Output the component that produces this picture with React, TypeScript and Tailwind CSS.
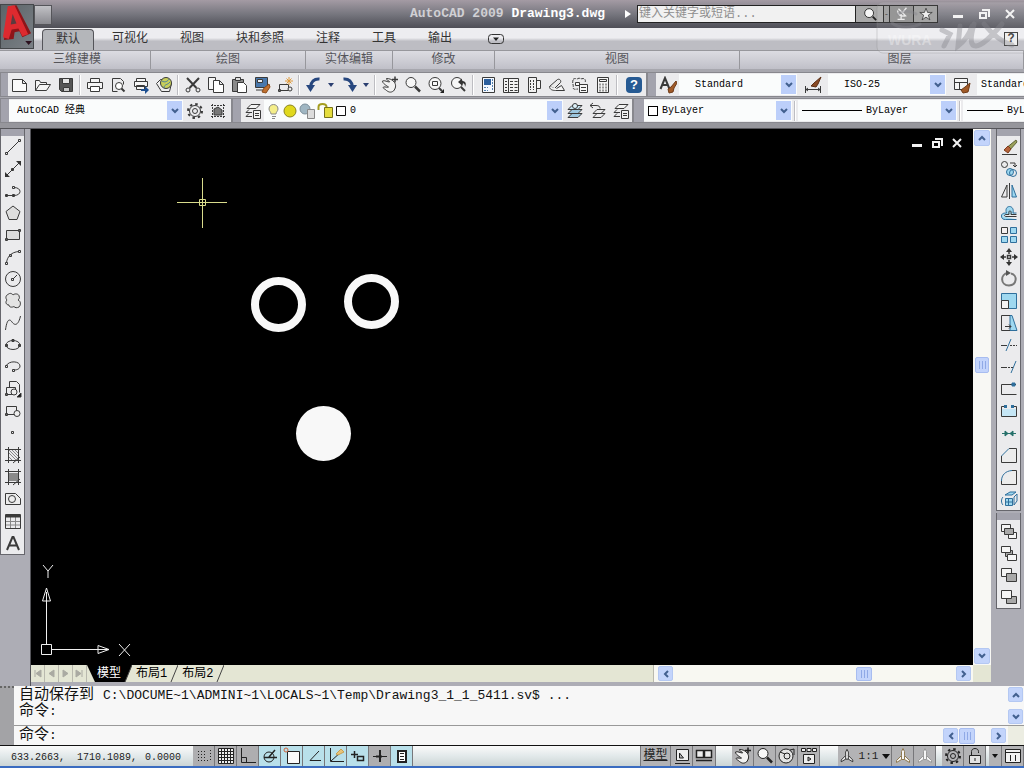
import { useState } from "react";
import type { ReactNode } from "react";
import clsx from "clsx";

const blue = "#2f6f9c";
const sky = "#9fd8f0";

const icons: Record<string, ReactNode> = {
  // --- standard toolbar ---
  new: <path d="M1.500 3.500h10l4 4v8h-14zM11.500 3.500v4h4" fill="#fafafa" />,
  open: <path d="M1.500 14.500v-10h4l1 2h6v2M1.500 14.500l4-6h11l-4 6z" fill="#f4f4f4" />,
  save: (
    <>
      <path d="M2.500 2.500h13v13h-11l-2-2z" fill="#555" />
      <path d="M5.500 2.500h7v5h-7z" fill="#e4e4e4" />
      <path d="M6.500 11.500h6v4h-6z" fill="#c9c9c9" />
    </>
  ),
  print: (
    <>
      <path d="M4.500 6.500v-4h9v4M1.500 6.500h15v6h-15z" fill="#f5f5f5" />
      <path d="M4.500 10.500h9v5h-9z" fill="#fff" />
    </>
  ),
  preview: (
    <>
      <path d="M3.500 15.500v-13h8l3 3v3M3.500 15.500h5" />
      <circle cx="10" cy="10" r="3.500" fill="#fff" />
      <path d="M12.500 12.500l3 3" strokeWidth="2" />
    </>
  ),
  publish: (
    <>
      <path d="M4.500 5.500v-3h9v3M2.500 5.500h13v5h-13zM4.500 9.500h8v4h-8z" fill="#f5f5f5" />
      <path d="M9 13h4v-3l4 4-4 4v-3H9z" fill="#1d4f91" stroke="none" />
    </>
  ),
  globe: (
    <>
      <path d="M1.500 7.500l4-4h7l4 4-2 8h-8z" fill="#f0f0f0" />
      <circle cx="11" cy="7" r="5.500" fill="#c8cf5a" />
      <path d="M7 5c3 2 6 0 7-2M9 12c0-4 4-3 6-6" stroke="#4c7d9c" />
    </>
  ),
  cut: (
    <>
      <path d="M3 2l9.500 10M15 2L5.500 12" strokeWidth="2" />
      <circle cx="4" cy="14" r="2" />
      <circle cx="14" cy="14" r="2" />
    </>
  ),
  copy: (
    <>
      <path d="M1.500 1.500h7v12h-7z" fill="#f6f6f6" />
      <path d="M6.500 4.500h6l4 4v8h-10zM12.500 4.500v4h4" fill="#fff" />
    </>
  ),
  paste: (
    <>
      <path d="M2.500 3.500h11v12h-11z" fill="#8a8a8a" />
      <path d="M5.500 1.500h5v3h-5z" fill="#ddd" />
      <path d="M7.500 6.500h6l3 3v7h-9z" fill="#fff" />
    </>
  ),
  match: (
    <>
      <path d="M2.500 1.500h12v10h-12z" fill="#4878ad" />
      <path d="M4.500 3.500h5v3h-5z" fill="#e8eef6" />
      <path d="M3 14h7" />
      <path d="M16 8l-5 4-2 4 4 1 4-6z" fill="#c07030" stroke="#8a4a18" />
    </>
  ),
  block: (
    <>
      <path d="M3.500 8.500h9v6h-9zM2.500 13.500h2v2h-2z" />
      <path d="M13 1v8M9 5h8M10.500 2.500l5 5M15.500 2.500l-5 5" stroke="#df9a3a" />
      <circle cx="14" cy="13" r="2" fill="#eee" />
    </>
  ),
  undo: (
    <>
      <path d="M14.500 3C9 2.500 6 6 5.500 11" stroke="#27477f" strokeWidth="3" />
      <path d="M1 9h9l-4.500 7z" fill="#27477f" stroke="none" />
    </>
  ),
  redo: (
    <>
      <path d="M3.500 3C9 2.500 12 6 12.500 11" stroke="#27477f" strokeWidth="3" />
      <path d="M8 9h9l-4.500 7z" fill="#27477f" stroke="none" />
    </>
  ),
  pan: (
    <>
      <path d="M1.500 5c2-1 5 1 7 1 1-1-4-2-3-3.500 3 0 6 1 8 4 2 3 1 6-1 8.500-3 2-5 1-7-.5-2-2-4-2-3-3.500 2-.5 4 1 5 0C6 10 1 7 1.500 5z" fill="#f2f2f2" />
      <path d="M14 0.500v6M11 3.500h6" strokeWidth="1.500" />
    </>
  ),
  zoom: (
    <>
      <circle cx="7" cy="6.500" r="5" fill="#f7f7f7" />
      <path d="M11 10.500l5 5" strokeWidth="2.500" />
    </>
  ),
  zoomWindow: (
    <>
      <circle cx="8" cy="7.500" r="6" fill="#f7f7f7" />
      <path d="M5.500 5.500h5v4h-5z" />
      <path d="M12 12l3 3" strokeWidth="2" />
      <path d="M17 13v4h-4z" fill="#222" stroke="none" />
    </>
  ),
  zoomPrev: (
    <>
      <circle cx="7" cy="7" r="5.500" fill="#f7f7f7" />
      <path d="M11 11l4 4" strokeWidth="2" />
      <path d="M8 6l4-3.500V5c3 0 5 2 3 6 0-3-1-4-3-4v2.500z" fill="#333" stroke="none" />
    </>
  ),
  props: (
    <>
      <path d="M3.500 1.500h12v15h-12z" fill="#f5f9ff" />
      <path d="M5 3h7v6H5z" fill="#2c5f9d" stroke="none" />
      <path d="M5 11.500h4M5 14.500h4M13.500 3v12" stroke="#5580ad" strokeDasharray="2 1" />
    </>
  ),
  design: (
    <>
      <path d="M1.500 2.500h15v14h-15zM6.500 2.500v14" fill="#f3f3f3" />
      <path d="M3 5.500h2M3 8.500h2M3 11.500h2M3 14.500h2M8 5.500h3M12.500 5.500h3M8 8.500h3M12.500 8.500h3M8 11.500h3M12.500 11.500h3M8 14.500h3M12.500 14.500h3" />
    </>
  ),
  palette: (
    <>
      <path d="M3.500 1.500h8v15h-8zM11.500 4.500h4v8h-4" fill="#f1f1f1" />
      <path d="M5.500 4v10M8.500 4v10" strokeDasharray="2 1" />
    </>
  ),
  sheet: (
    <>
      <path d="M1.500 10.500l8-7c2-1 4 1 3 3l-6 6z" fill="#ececec" />
      <path d="M1.500 10.500c0 3 3 4 6 4h9l-3-5-5 3" fill="#f4f4f4" />
    </>
  ),
  markup: (
    <>
      <path d="M2 3.500c2-2 4 0 5-1 2-1 3 1 5 0 2 0 3 2 2 4M2 4c-1 4 1 5 0 8 1 2 3 1 5 1" strokeDasharray="3 1" />
      <path d="M8.500 8.500h8v8h-8zM10 11.500h5M10 14.500h5M4.500 6.500h4v3h-4z" fill="#f7f7f7" />
    </>
  ),
  calc: (
    <>
      <path d="M3.500 1.500h11v15h-11z" fill="#f5f5f5" />
      <path d="M5.500 3.500h7v2h-7z" />
      <path d="M5.500 8.500h8M5.500 11.500h8M5.500 14.500h8" strokeDasharray="1 2" strokeWidth="2" />
    </>
  ),
  brushA: (
    <>
      <path d="M1.500 13L6 2l4.500 11M3 9h6" strokeWidth="2" />
      <path d="M17 5l-5 6-3 2 1 4 4-1 1-4 3-5z" fill="#a15a28" stroke="#6d3a17" />
    </>
  ),
  dim: (
    <>
      <path d="M1.500 10v7M16.500 10v7M2 13.500h14M4 12l-2 1.500L4 15M14 12l2 1.500-2 1.500" />
      <path d="M17 1l-7 6-3 3 5 1 2-3z" fill="#8a4a24" stroke="#5c2f14" />
    </>
  ),
  tableBrush: (
    <>
      <path d="M1.500 2.500h13v11h-13zM1.500 6.500h13M6.500 6.500v7" fill="#f5f5f5" />
      <path d="M17 7l-5 4-4 3 2 3 5-1 1-4z" fill="#a15a28" stroke="#6d3a17" />
    </>
  ),
  gear: (
    <>
      <circle cx="9" cy="9" r="2.500" />
      <circle cx="9" cy="9" r="5.500" />
      <circle cx="9" cy="9" r="7" strokeWidth="2" strokeDasharray="2.500 3" />
    </>
  ),
  frame: (
    <>
      <path d="M2 3.500h14M2 14.500h14M3.500 2v14M14.500 2v14" strokeDasharray="2 1" />
      <path d="M5 13V7l4-2 4 3v5z" fill="#777" />
    </>
  ),
  layers: (
    <path d="M3 6.500l4-4h9l-4 4zM2 10.500l3-3M2 10.500h6M2 14.500l3-3M2 14.500h6M9.500 8.500h7v8h-7zM11 11.500h4M11 13.500h4" fill="#f3f3f3" />
  ),
  layerCur: (
    <>
      <path d="M2 15.500l4-4h10l-4 4zM2 11.500l4-4h10l-4 4z" fill="#9cc6de" />
      <path d="M2 7.500l4-4h10l-4 4z" fill="#c6e4f2" />
      <circle cx="9" cy="4" r="2.500" fill="#dff3fb" />
    </>
  ),
  layerPrev: (
    <path d="M4 15.500l4-4h8l-4 4zM4 11.500l4-4h8l-4 4zM1 3.500h6c3 0 4 1 4 3M4 1L1 3.500 4 6" fill="none" />
  ),
  // --- draw toolbar ---
  line: <path d="M3 15L15 3M1.500 14.500h2v2h-2zM14.500 1.500h2v2h-2z" />,
  xline: (
    <>
      <path d="M2 16L16 2M7.500 8.500h2v2h-2z" />
      <path d="M12 1h5v5zM1 12v5h5z" fill="#333" stroke="none" />
    </>
  ),
  pline: <path d="M2 13.500h8c8 0 8-8 0-8M1.500 12.500h2v2h-2zM8.500 12.500h2v2h-2zM8.500 4.500h2v2h-2z" />,
  polygon: <path d="M9 2l7 5.500-3 8H5l-3-8z" fill="#dedede" />,
  rect: <path d="M2.500 4.500h13v9h-13zM1.500 12.500h2v2h-2zM14.500 3.500h2v2h-2z" fill="#dcdcdc" />,
  arc: <path d="M2.500 15C3 9 7 4 15 3.500M1.500 14.500h2v2h-2zM5.500 6.500h2v2h-2zM14.500 2.500h2v2h-2z" />,
  circle: (
    <>
      <circle cx="9" cy="9" r="7.500" />
      <path d="M9 9l4-4M7.500 8.500h2v2h-2z" />
    </>
  ),
  cloud: (
    <path d="M4 2.500c2-2 4-1 5 .5 2-2 6-1 6 1 1 2 0 3-1 4 3 1 3 5 1 7-2 1-4 1-5-.5-2 1-5 1-5-1.500-3 0-4-3-2-5-2-2-1-5 1-5.500z" fill="#e3e3e3" />
  ),
  spline: <path d="M1.500 16C3 4 6 5 8 8s6 5 8.500-6" />,
  ellipse: (
    <>
      <ellipse cx="9" cy="9" rx="7" ry="4.500" />
      <path d="M1.500 8.500h2v2h-2zM14.500 8.500h2v2h-2zM8 3.500h2v2H8z" fill="#444" />
    </>
  ),
  ellipseArc: <path d="M2 8c3-6 14-5 14 0 0 3-3 4-6 4M1.500 7.500h2v2h-2zM8.500 11.500h2v2h-2z" />,
  insert: (
    <>
      <path d="M5.500 7v-5.500h7l3 3v8M2.500 7.500h9v7h-9z" />
      <path d="M1.500 13.500h2v2h-2z" />
      <circle cx="10" cy="12" r="3" fill="#eee" />
      <path d="M17 13v4h-4z" fill="#111" />
    </>
  ),
  makeBlock: (
    <>
      <path d="M2.500 4.500h10v8h-10zM1.500 11.500h2v2h-2z" />
      <circle cx="13" cy="11.500" r="3" fill="#eee" />
    </>
  ),
  point: <path d="M7.500 7.500h2v2h-2z" />,
  hatch: (
    <>
      <path d="M5 7l7 7M5 11l3 3M8 4l6 6M5 4l9 9M11 4l3 3" stroke="#888" />
      <path d="M1 3.500h16M1 14.500h16M4.500 1v16M14.500 1v16M9 17l7-6" />
    </>
  ),
  gradient: (
    <>
      <path d="M5 5h9v8H5z" fill="#8a8a8a" stroke="none" />
      <path d="M1 3.500h16M1 14.500h16M4.500 1v16M14.500 1v16M9 17l7-6" />
    </>
  ),
  region: (
    <>
      <path d="M1.500 3.500h10l5 5v6h-15z" fill="#ededed" />
      <circle cx="8" cy="9" r="3.500" />
    </>
  ),
  table: (
    <>
      <path d="M6.500 5v11M11.500 5v11M2 9.500h14M2 13h14" stroke="#888" />
      <path d="M1.500 2.500h15v14h-15z" />
      <path d="M2 4h14" strokeWidth="3" />
    </>
  ),
  text: <path d="M3 16L8.500 3h1L15 16M5 11.500h8" strokeWidth="2" />,
  // --- modify toolbar ---
  erase: (
    <>
      <path d="M2 16.500h15" />
      <path d="M16 2l1 2-8 9-4-2z" fill="#9aa05a" stroke="#5d6238" />
      <path d="M8 8l3 3-3 4-4-3z" fill="#b5623a" stroke="#7c3b1e" />
    </>
  ),
  copyObj: (
    <>
      <circle cx="4.500" cy="4.500" r="3" />
      <path d="M10 3h5v4M13 5l2 2 2-2" />
      <circle cx="10" cy="12" r="3.500" stroke={blue} fill={sky} />
      <circle cx="13" cy="13" r="3.500" stroke={blue} />
    </>
  ),
  mirror: (
    <>
      <path d="M7 3v12H1.500zM9.500 1v16" />
      <path d="M12 3v12h4.500z" fill={sky} stroke={blue} />
    </>
  ),
  offset: (
    <>
      <path d="M1.500 12c0-3 3-3 5-3C5 5 7 2.500 9.500 2.500S14 5 13 9h3.500M1.500 12c0 3 2 3.500 4 3.500h11" fill={sky} stroke={blue} />
      <path d="M16.500 12.500H6c-2 0-2-2 0-2h3c-1-5 3-5 2 0h5.500" />
    </>
  ),
  array: (
    <>
      <path d="M1.500 1.500h6v6h-6z" fill="#f5f0f0" />
      <path d="M10.500 1.500h6v6h-6zM1.500 10.500h6v6h-6zM10.500 10.500h6v6h-6z" fill={sky} stroke={blue} />
    </>
  ),
  move: (
    <>
      <path d="M9 3v3M9 12v3M3 9h3M12 9h3M7.500 7.500h3v3h-3z" strokeWidth="1.500" />
      <path d="M9 0l3 4H6zM9 18l3-4H6zM0 9l4-3v6zM18 9l-4-3v6z" fill="#333" stroke="none" />
    </>
  ),
  rotate: (
    <>
      <path d="M8 3c-8 1-8 12 1 12.500C17 15 18 5 11 3.500" stroke="#777" strokeWidth="2" />
      <path d="M6 0l5 3-5 3z" fill="#555" stroke="none" />
    </>
  ),
  scale: (
    <>
      <path d="M1.500 1.500h15v15h-8v-8h-7z" fill={sky} stroke={blue} />
      <path d="M1.500 8.500h7v8h-7z" fill="#f4f4f4" />
    </>
  ),
  stretch: (
    <>
      <path d="M10 1.500h2l5 15h-7z" fill={sky} stroke={blue} />
      <path d="M10 1.500H1.500v15H10M5 12.500h6M9 10.500l2 2-2 2" />
    </>
  ),
  trim: (
    <>
      <path d="M6 15L11 3" stroke={blue} />
      <path d="M1 9.500h6" />
      <path d="M10 9.500h7" strokeDasharray="2 1" />
    </>
  ),
  extend: (
    <>
      <path d="M11 15l5-12" stroke={blue} />
      <path d="M1 9.500h6" />
      <path d="M8 9.500h5" strokeDasharray="2 1" />
    </>
  ),
  breakAt: (
    <>
      <path d="M16 4.500H1.500v10h15" />
      <path d="M12 3h3v3h-3z" fill={blue} stroke={blue} />
    </>
  ),
  breakObj: (
    <>
      <path d="M2 7h14v8H2z" fill="#c5e6f5" stroke="none" />
      <path d="M4 4.500H1.500v10h15v-10H14" />
      <path d="M4 3h3v3H4zM11 3h3v3h-3z" fill={blue} stroke="none" />
    </>
  ),
  join: <path d="M2 9.500h14M5 7l3 2.500L5 12zM13 7l-3 2.500 3 2.500z" fill="#26716b" stroke="#26716b" />,
  chamfer: (
    <>
      <path d="M9 2.500h7.500v14h-15V10" fill="#ececec" />
      <path d="M1.500 10L9 2.500" stroke={blue} />
    </>
  ),
  fillet: (
    <>
      <path d="M12 2.500h4.500v14h-15V13" fill="#ececec" />
      <path d="M1.500 13c0-6 4-10 10.500-10.500" stroke={blue} />
    </>
  ),
  explode: (
    <>
      <path d="M5 5l5-3h6l-4 3z" fill={sky} stroke={blue} />
      <path d="M5.500 8.500h7v7h-7z" fill={sky} stroke={blue} />
      <path d="M3 7c-2 2-2 6 0 8M14 7l3-3v7l-3 4zM8.500 9v6M6 12h6" stroke={blue} />
    </>
  ),
  // --- draw order toolbar ---
  order1: (
    <>
      <path d="M1.500 2.500h9v7h-9zM8.500 10.500h8v6h-8z" fill="#f5f5f5" />
      <path d="M4.500 6.500h9v6h-9z" fill="#a9a9a9" />
    </>
  ),
  order2: (
    <>
      <path d="M5.500 6.500h7v6h-7z" fill="#a9a9a9" />
      <path d="M1.500 2.500h9v6h-9zM7.500 10.500h9v6h-9z" fill="#f5f5f5" />
    </>
  ),
  order3: (
    <>
      <path d="M1.500 2.500h10v8h-10z" fill="#f5f5f5" />
      <path d="M6.500 7.500h10v8h-10z" fill="#a9a9a9" />
    </>
  ),
  order4: (
    <>
      <path d="M6.500 8.500h10v7h-10z" fill="#a9a9a9" />
      <path d="M1.500 2.500h10v8h-10z" fill="#f5f5f5" />
    </>
  ),
  // --- status bar ---
  snap: <path d="M3 4.500h9M3 7.500h9M3 10.500h9M3 13.500h12M15.500 3v11" strokeDasharray="1 2" />,
  grid: <path d="M1.500 1.500h15v15h-15zM4.500 1v16M7.500 1v16M10.500 1v16M13.500 1v16M1 4.500h16M1 7.500h16M1 10.500h16M1 13.500h16" fill="#eee" />,
  ortho: <path d="M2.500 1v14.500H17M2.500 10.500h5v5" />,
  polar: (
    <>
      <circle cx="8" cy="10" r="5" />
      <path d="M3 10.500h13M8 10l6-7" strokeWidth="1.500" />
    </>
  ),
  osnap: (
    <>
      <path d="M4.500 4.500h12v12h-12z" fill="#fafafa" />
      <circle cx="3" cy="3" r="2" stroke="#d0633b" />
    </>
  ),
  otrack: <path d="M14 4L5 13.500h11" />,
  ducs: (
    <>
      <path d="M3.500 1v13.500H17M4 14L14 5" />
      <path d="M9 7l5-5 3 3-6 3z" fill="#e8c47a" stroke="#c9a050" />
    </>
  ),
  dyn: <path d="M2 7.500h7M5.500 4v7M8.500 9.500h6v4h-6z" strokeWidth="1.500" />,
  lwt: (
    <>
      <path d="M2 9.500h14" />
      <path d="M9 3v12M5 9.500h6" strokeWidth="2" />
    </>
  ),
  qp: (
    <>
      <path d="M5 4h8v11H5z" strokeWidth="2" fill="#fff" />
      <path d="M7 6.500h4M7 9.500h4M7 12.500h4" />
    </>
  ),
  layout: <path d="M3.500 2.500h12v11h-12zM2 16.500h15M6.500 6v5h4z" fill="#eee" />,
  quickView: <path d="M1.500 3.500h7v7h-7zM9.500 3.500h7v7h-7zM1 13.500h16" fill="#eee" strokeWidth="1.500" />,
  wheel: (
    <>
      <circle cx="8" cy="9" r="7" fill="#e4e4e4" />
      <circle cx="9" cy="9" r="3" />
      <path d="M2 5l5 2M12 3l4-1v6" />
    </>
  ),
  motion: <path d="M1.500 1.500h4v3h-4zM7 1.500h4v3H7zM12.500 1.500h4v3h-4zM3.500 7.500h11v9h-11zM8 10v4l3-2z" fill="#eee" />,
  annot: <path d="M9 1.500l1.500 3v4l5 5v2l-5-3h-3l-5 3v-2l5-5v-4zM7.500 8.500v4M10.500 8.500v4" fill="#f6f6f6" />,
  lock: (
    <>
      <path d="M5.500 8V4.500c0-4 7-4 7 0V6" />
      <path d="M3.500 8.500h11v8h-11z" fill="#e3e3e3" />
      <path d="M9 11v3" />
    </>
  ),
  clean: <path d="M1.500 2.500h15v13h-15zM1.500 5.500h15M6.500 8v6M11.500 8v6" fill="#f2f2f2" />,
  find: (
    <>
      <circle cx="8" cy="8" r="5" fill="#f6f6f6" />
      <path d="M12 12l4 4" strokeWidth="2" />
    </>
  ),
  satellite: <path d="M4 15h8M8 15V9M4 5c0 5 4 7 9 6L5 3M10 7l4-5" stroke="#e8e8e8" strokeWidth="1.500" />,
  star: <path d="M9 1.500l2 5.500h6l-5 3.500 2 6-5-3.500-5 3.500 2-6L1 7h6z" fill="#ececec" />,
};

const Icon = ({ name, className }: { name: string; className?: string }) => (
  <svg viewBox="0 0 18 18" className={clsx("shrink-0", className ?? "h-[18px] w-[18px]")} fill="none" stroke="currentColor">
    {icons[name]}
  </svg>
);

const ToolButton = ({ name, className }: { name: string; className?: string }) => (
  <button type="button" aria-label={name} className={clsx("flex shrink-0 items-center justify-center text-[#3a3a3a]", className ?? "h-full w-[23px]")}>
    <Icon name={name} />
  </button>
);

const Separator = () => <span className="mx-[2px] h-5 w-px shrink-0 border-r border-white bg-[#bdbdc2] box-content" />;

const Grip = ({ className }: { className?: string }) => (
  <span className={clsx("shrink-0 bg-[#a3a3ad]", className ?? "h-full w-2")} />
);

const Arrow = ({ dir }: { dir: "up" | "down" | "left" | "right" }) => {
  const d = { up: "M2 7l3-3 3 3", down: "M2 3l3 3 3-3", left: "M7 2L4 5l3 3", right: "M3 2l3 3-3 3" }[dir];
  return (
    <svg viewBox="0 0 10 10" className="h-[10px] w-[10px]" fill="none" stroke="#42608f" strokeWidth="2">
      <path d={d} />
    </svg>
  );
};

const ScrollButton = ({ dir, className }: { dir: "up" | "down" | "left" | "right"; className?: string }) => (
  <button
    type="button"
    aria-label={`Scroll ${dir}`}
    className={clsx("flex shrink-0 items-center justify-center rounded-xs border border-[#b4c8f2] bg-[#c3d4fb]", className ?? "h-[15px] w-[15px]")}
  >
    <Arrow dir={dir} />
  </button>
);

type ComboProps = { label: string; value: string; className?: string; textClass?: string; children?: ReactNode };

const Combo = ({ label, value, className, textClass, children }: ComboProps) => (
  <label className={clsx("relative flex h-[21px] min-w-0 shrink-0 items-center overflow-hidden bg-[#fafcfc]", className)}>
    {children}
    <select
      aria-label={label}
      className={clsx("h-full min-w-0 flex-1 appearance-none bg-transparent text-[10px] text-black outline-none", textClass)}
    >
      <option>{value}</option>
    </select>
    <span className="pointer-events-none absolute right-px flex h-[19px] w-[15px] items-center justify-center bg-[#bccffa]">
      <Arrow dir="down" />
    </span>
  </label>
);

const ribbonTabs = ["默认", "可视化", "视图", "块和参照", "注释", "工具", "输出"];

const panels = [
  { title: "三维建模", width: "w-[147px]" },
  { title: "绘图", width: "w-[155px]" },
  { title: "实体编辑", width: "w-[87px]" },
  { title: "修改", width: "w-[102px]" },
  { title: "视图", width: "w-[245px]" },
  { title: "图层", width: "flex-1 pl-9" },
];

const drawTools = [
  "line", "xline", "pline", "polygon", "rect", "arc", "circle", "cloud", "spline", "ellipse",
  "ellipseArc", "insert", "makeBlock", "point", "hatch", "gradient", "region", "table", "text",
];

const modifyTools = [
  "erase", "copyObj", "mirror", "offset", "array", "move", "rotate", "scale", "stretch",
  "trim", "extend", "breakAt", "breakObj", "join", "chamfer", "fillet", "explode",
];

const toggles = [
  { name: "snap", on: false },
  { name: "grid", on: false },
  { name: "ortho", on: false },
  { name: "polar", on: true },
  { name: "osnap", on: true },
  { name: "otrack", on: true },
  { name: "ducs", on: true },
  { name: "dyn", on: true },
  { name: "lwt", on: false },
  { name: "qp", on: true },
];

const WindowButtons = ({ className }: { className?: string }) => (
  <div className={clsx("flex items-center text-[#f2f2f2]", className)}>
    <button type="button" aria-label="Minimize">
      <svg viewBox="0 0 12 12" className="h-3 w-3"><path d="M1 7h10v3H1z" fill="currentColor" /></svg>
    </button>
    <button type="button" aria-label="Restore">
      <svg viewBox="0 0 12 12" className="h-3 w-3" fill="none" stroke="currentColor" strokeWidth="2">
        <path d="M2 5h6v5H2zM4 2h7v7" />
      </svg>
    </button>
    <button type="button" aria-label="Close">
      <svg viewBox="0 0 12 12" className="h-3 w-3" fill="none" stroke="currentColor" strokeWidth="2">
        <path d="M2 2l8 8M10 2l-8 8" />
      </svg>
    </button>
  </div>
);

const Watermark = () => (
  <svg viewBox="0 0 148 54" className="pointer-events-none absolute top-0 right-0 h-[54px] w-[148px]" fill="none">
    <rect x="1" y="2" width="160" height="51" rx="6" fill="#fff" fillOpacity="0.100" stroke="#888" strokeOpacity="0.300" />
    <g stroke="#85858b" strokeOpacity="0.400" strokeLinecap="round">
      <path d="M16 23c7 6 21 5 28 1M22 14c6-4 14-3 18 0" strokeWidth="3" />
      <path d="M66 30l8 4-6 12M84 26l-2 20c8-6 12-14 14-20M98 24c-4 14-4 22 2 22s14-8 26-22M108 24c8 10 18 18 28 21" strokeWidth="5" />
    </g>
    <text x="12" y="45" fontSize="14" fontWeight="700" fill="#fff" fillOpacity="0.350" fontFamily="Liberation Sans">WURA</text>
  </svg>
);

const TitleBar = () => (
  <header className="relative shrink-0 bg-[#b4b4ba]">
    <div className="flex h-7 items-center bg-linear-to-b from-[#a49ba4] via-[#77777f] to-[#4e4e56] pl-[52px]">
      <h1 className="flex-1 pr-5 text-right font-[Liberation_Mono,monospace] text-[13px] leading-4 font-bold whitespace-pre text-white">
        <span className="text-[#d0d0d4]">AutoCAD 2009 </span>Drawing3.dwg
      </h1>
      <svg viewBox="0 0 6 8" className="mr-1.5 h-2 w-[6px]"><path d="M0 0l6 4-6 4z" fill="#fff" /></svg>
      <div className="flex h-[18px] border border-[#222] text-[#222]">
        <input
          aria-label="搜索"
          placeholder="键入关键字或短语..."
          className="w-[217px] bg-[#f1f1f1] pl-px text-[12px] outline-none placeholder:text-[#8e8e8e]"
        />
        <button type="button" aria-label="Search" className="flex w-7 items-center justify-center border-l border-[#222] bg-[#aaa]">
          <Icon name="find" className="h-4 w-4" />
        </button>
        <button type="button" aria-label="Search options" className="w-[6px] border-l border-[#222] bg-[#999] text-[8px] leading-4">-</button>
        <button type="button" aria-label="Communication Center" className="flex w-6 items-center justify-center border-l border-[#222] bg-[#8b8b8b]">
          <Icon name="satellite" className="h-4 w-4" />
        </button>
        <button type="button" aria-label="Favorites" className="flex w-6 items-center justify-center border-l border-[#222] bg-[#9a9a9a]">
          <Icon name="star" className="h-[14px] w-[14px]" />
        </button>
      </div>
      <WindowButtons className="gap-[14px] pr-2 pl-[14px]" />
    </div>
    <nav className="flex h-[22px] items-stretch bg-linear-to-b from-[#ededf0] from-45% to-[#bdbdc3] to-60% pr-[6px] pl-[42px] text-[12px] text-[#333]">
      {ribbonTabs.map((tab, i) => (
        <button
          key={tab}
          type="button"
          className={clsx(
            "shrink-0",
            i === 0 ? "mt-px mr-[2px] rounded-t border border-b-0 border-[#55555a] bg-[#b4b6ba] px-[13px]" : "px-4"
          )}
        >
          {tab}
        </button>
      ))}
      <button type="button" aria-label="More" className="ml-5 flex items-center">
        <svg viewBox="0 0 16 10" className="h-[10px] w-4" fill="none" stroke="#333">
          <rect x="0.500" y="0.500" width="15" height="9" rx="3" />
          <path d="M5 3.500h6L8 7z" fill="#222" stroke="none" />
        </svg>
      </button>
      <button type="button" aria-label="Help" className="mt-1 ml-auto h-[14px] w-[14px] border border-[#333] bg-[#eee] text-[12px] leading-3 font-bold">
        ?
      </button>
    </nav>
    <div className="flex h-[19px] bg-linear-to-b from-[#dcdce2] to-[#c0c0c8] pl-1 text-[12px] text-[#55555a] border-t border-[#97979c]">
      {panels.map((p) => (
        <div key={p.title} className={clsx("border-r border-[#97979c] text-center leading-[18px]", p.width)}>
          {p.title}
        </div>
      ))}
    </div>
    <button
      type="button"
      aria-label="Application menu"
      className="absolute top-1 left-0 h-[45px] w-[34px] border border-[#44474a] bg-linear-to-br from-[#5b6468] to-[#7b8086]"
    >
      <svg viewBox="0 0 33 44" className="h-full w-full">
        <path d="M8 1l8-1 15 29-9 4-3-6-5 1-1 7-10 1z" fill="#8d1519" />
        <path d="M7 1l7-1 14 30-6 2-4-8-7 1-3 10-6-2z" fill="#dd2a2f" />
        <path d="M12 9l-2 11 6-1z" fill="#5c3a3e" />
        <path d="M25 37h7l-3.500 4z" fill="#2d1220" />
      </svg>
    </button>
    <span className="absolute top-[5px] left-[34px] h-5 w-[18px] border border-[#55555a] bg-linear-to-b from-[#c2c2c6] to-[#8a8a90]" />
    <Watermark />
  </header>
);

const bar = "flex h-[25px] shrink-0 items-center border border-[#88888e] bg-[#ebebed]";

const Caret = () => (
  <button type="button" aria-label="History" className="flex w-3 items-center justify-center">
    <svg viewBox="0 0 6 4" className="h-1 w-[6px]"><path d="M0 0h6L3 4z" fill="#2b3f70" /></svg>
  </button>
);

const Toolbars = () => (
  <div className="shrink-0 overflow-hidden bg-[#a7a7ae] pt-[3px]">
    <div className="flex w-full">
      <div className={clsx(bar, "w-[647px]")}>
        <Grip className="h-full w-[7px]" />
        {["new", "open", "save"].map((n) => <ToolButton key={n} name={n} />)}
        <Separator />
        {["print", "preview", "publish", "globe"].map((n) => <ToolButton key={n} name={n} />)}
        <Separator />
        {["cut", "copy", "paste", "match", "block"].map((n) => <ToolButton key={n} name={n} />)}
        <Separator />
        <ToolButton name="undo" />
        <Caret />
        <ToolButton name="redo" />
        <Caret />
        <Separator />
        {["pan", "zoom", "zoomWindow", "zoomPrev"].map((n) => <ToolButton key={n} name={n} />)}
        <Separator />
        {["props", "design", "palette", "sheet", "markup", "calc"].map((n) => <ToolButton key={n} name={n} />)}
        <Separator />
        <button type="button" aria-label="Help" className="ml-1.5 h-4 w-4 rounded-sm bg-[#265a93] font-[Liberation_Sans,sans-serif] text-[13px] leading-4 font-bold text-white">
          ?
        </button>
      </div>
      <div className={clsx(bar, "flex-1")}>
        <Grip />
        <ToolButton name="brushA" />
        <Combo label="Text style" value="Standard" className="w-[118px]" textClass="pl-4" />
        <ToolButton name="dim" className="h-full w-[31px]" />
        <Combo label="Dimension style" value="ISO-25" className="w-[118px]" textClass="pl-4" />
        <ToolButton name="tableBrush" className="h-full w-[31px]" />
        <Combo label="Table style" value="Standard" className="w-[118px]" textClass="pl-1" />
      </div>
    </div>
    <div className="mt-px flex w-full">
      <div className={clsx(bar, "w-[232px]")}>
        <Grip />
        <Combo label="Workspace" value="AutoCAD 经典" className="w-[174px]" textClass="pl-2" />
        <ToolButton name="gear" />
        <ToolButton name="frame" />
      </div>
      <div className={clsx(bar, "w-[401px]")}>
        <Grip />
        <ToolButton name="layers" />
        <Combo label="Layer" value="0" className="w-[299px]" textClass="pl-1">
          <svg viewBox="0 0 82 20" className="h-5 w-[82px] shrink-0" fill="none" stroke="#444">
            <path d="M7 13c0-2-2-3-2-5 0-6 9-6 9 0 0 2-2 3-2 5zM8 15.500h4M8 17.500h3" fill="#f4ee8a" stroke="#888" />
            <circle cx="26" cy="10" r="6" fill="#e0d81c" stroke="#8a8420" />
            <circle cx="41" cy="8" r="5" fill="#9fb6c2" stroke="#7c8f9a" />
            <path d="M43.500 8.500h7v9h-7z" fill="#dcdcdc" stroke="#888" />
            <path d="M54.500 9V6c0-4 8-4 8 0v2" stroke="#a59e20" strokeWidth="2" />
            <path d="M60.500 6.500h8v10h-8z" fill="#e5dd3e" stroke="#77721c" />
            <path d="M72.500 5.500h9v9h-9z" fill="#fff" stroke="#111" />
          </svg>
        </Combo>
        {["layerCur", "layerPrev", "layers"].map((n) => <ToolButton key={n} name={n} />)}
      </div>
      <div className={clsx(bar, "flex-1")}>
        <Grip className="h-full w-[10px]" />
        <Combo label="Color" value="ByLayer" className="w-[148px]" textClass="pl-1">
          <span className="ml-1 h-[10px] w-[10px] shrink-0 border border-black bg-white" />
        </Combo>
        <Separator />
        <Combo label="Linetype" value="ByLayer" className="w-[159px]" textClass="pl-1">
          <span className="ml-1 h-px w-[60px] shrink-0 bg-black" />
        </Combo>
        <Separator />
        <Combo label="Lineweight" value="ByLayer" className="w-[159px]" textClass="pl-1">
          <span className="ml-1 h-px w-9 shrink-0 bg-black" />
        </Combo>
      </div>
    </div>
    <div className="h-[6px] border-b border-[#55555a] bg-[#96969c]" />
  </div>
);

const VerticalBar = ({ tools, className }: { tools: string[]; className?: string }) => (
  <div className={clsx("flex shrink-0 flex-col items-center border border-t-0 border-[#66666c] bg-[#ebebed]", className)}>
    <Grip className="h-[7px] w-full" />
    {tools.map((t) => <ToolButton key={t} name={t} className="h-[22px] w-full" />)}
  </div>
);

const Drawing = () => (
  <div className="relative min-h-0 flex-1 overflow-hidden bg-black">
    <svg viewBox="0 0 400 360" className="absolute top-0 left-0 h-[360px] w-[400px]" fill="none">
      <g stroke="#d9dc8c">
        <path d="M146 73.500h50M171.500 49v50" />
        <path d="M168.500 70.500h6v6h-6z" />
      </g>
      <circle cx="247.500" cy="175.500" r="23.500" stroke="#f8f8f8" strokeWidth="8" />
      <circle cx="340.500" cy="172.500" r="23.500" stroke="#f8f8f8" strokeWidth="8" />
      <circle cx="292.500" cy="304.500" r="27.500" fill="#f8f8f8" />
    </svg>
    <svg viewBox="0 0 110 110" className="absolute bottom-0 left-0 h-[110px] w-[110px]" fill="none" stroke="#f0f0f0">
      <path d="M10.500 89.500h10v10h-10zM15.500 89V37M21 94.500h57" />
      <path d="M15.500 33l4 13h-8zM78 94.500l-11-4v8z" />
      <path d="M12 10l5 6 5-6M17 16v7M88 89l11 12M99 89L88 101" />
    </svg>
    <WindowButtons className="absolute top-2 right-[10px] gap-2" />
  </div>
);

const Thumb = ({ className }: { className: string }) => (
  <span className={clsx("flex shrink-0 items-center justify-center rounded-xs border border-[#a8bdf0] bg-[#c3d4fb]", className)}>
    <svg viewBox="0 0 8 8" className="h-2 w-2" stroke="#8fa9e6"><path d="M1.500 0v8M4.500 0v8M7.500 0v8" /></svg>
  </span>
);

const LayoutTabs = () => {
  const [active, setActive] = useState("模型");
  return (
    <div className="flex h-[17px] shrink-0 items-stretch bg-[#e4e6d4] text-[12px] leading-4">
      <div className="flex w-[56px] shrink-0 text-[#aaaaa2]">
        {["M4 3v7M10 3L5 6.500l5 3.500z", "M9 3L4 6.500l5 3.500z", "M4 3l5 3.500L4 10z", "M9 3v7M3 3l5 3.500L3 10z"].map((d) => (
          <button key={d} type="button" aria-label="Move tabs" className="flex-1 border-r border-[#b9b9ae]">
            <svg viewBox="0 0 13 13" className="h-[13px] w-[13px]" fill="currentColor" stroke="currentColor"><path d={d} /></svg>
          </button>
        ))}
      </div>
      {["模型", "布局1", "布局2"].map((t) => (
        <button
          key={t}
          type="button"
          onClick={() => setActive(t)}
          className={clsx("flex shrink-0 items-center", active === t ? "bg-black pl-[10px] text-white [clip-path:polygon(0_0,100%_0,100%_100%,8px_100%)]" : "pl-1 text-black")}
        >
          {t}
          <svg viewBox="0 0 11 17" className="h-[17px] w-[11px]">
            <path d="M11 0L4 17h8z" fill="#e4e6d4" />
            <path d="M11 0L4 17" stroke="#444" />
          </svg>
        </button>
      ))}
      <div className="ml-auto flex w-[338px] items-center border-l border-[#b9b9ae] bg-[#f8f8f2]">
        <ScrollButton dir="left" className="ml-1 h-[15px] w-[15px]" />
        <Thumb className="mr-[84px] ml-auto h-[14px] w-4" />
        <ScrollButton dir="right" />
        <span className="ml-[2px] h-full w-[18px] shrink-0 bg-[#e4e6d4]" />
      </div>
    </div>
  );
};

const Mono = ({ children }: { children: ReactNode }) => (
  <span className="font-[Liberation_Mono,monospace] text-[13px]">{children}</span>
);

const CommandLine = () => (
  <section className="flex h-[59px] shrink-0 bg-[#f7f7f7] text-[15px] text-[#111]">
    <div className="w-[14px] shrink-0 border-t-2 border-dotted border-[#666] bg-[#a3a3a6]" />
    <div className="flex min-w-0 flex-1 flex-col">
      <div className="flex h-10 shrink-0 border-b border-[#999]">
        <div className="min-w-0 flex-1 overflow-hidden pt-[2px] pl-[5px] leading-4">
          <p className="whitespace-pre">
            自动保存到 <Mono>C:\DOCUME~1\ADMINI~1\LOCALS~1\Temp\Drawing3_1_1_5411.sv$ ...</Mono>
          </p>
          <p>命令<Mono>:</Mono></p>
        </div>
        <div className="flex w-4 flex-col justify-between py-px">
          <ScrollButton dir="up" />
          <ScrollButton dir="down" />
        </div>
      </div>
      <div className="flex min-h-0 flex-1 items-center">
        <label className="flex min-w-0 flex-1 items-center pl-[5px]">
          <span className="shrink-0 leading-4">命令<Mono>:</Mono></span>
          <input aria-label="命令" className="h-4 min-w-0 flex-1 bg-transparent pl-2 outline-none" />
        </label>
        <ScrollButton dir="left" />
        <Thumb className="ml-px h-4 w-4" />
        <ScrollButton dir="right" className="ml-4 h-[15px] w-[15px]" />
        <span className="ml-[2px] h-full w-4 bg-[#ecede2]" />
      </div>
    </div>
  </section>
);

const statusCell = "flex h-full shrink-0 items-center justify-center border-r border-[#77777a] bg-[#b3b3b5]";

const StatusBar = () => (
  <footer className="flex h-[23px] shrink-0 items-stretch border-t border-b-2 border-t-[#111] border-b-[#3a6cc0] bg-linear-to-b from-[#fafafa] via-[#e2e9ea] to-[#ccd5d5] text-[#222]">
    <p className="flex w-[193px] shrink-0 gap-3 pl-[11px] font-[Liberation_Mono,monospace] text-[10px] leading-6 whitespace-nowrap">
      <span>633.2663,</span>
      <span>1710.1089,</span>
      <span className="-ml-1">0.0000</span>
    </p>
    {toggles.map((t) => (
      <button
        key={t.name}
        type="button"
        aria-label={t.name}
        aria-pressed={t.on}
        className={clsx("flex w-[22px] shrink-0 items-center justify-center border-r border-[#77777a]", t.on ? "bg-[#b9e0ea]" : "bg-[#aeaeb0]")}
      >
        <Icon name={t.name} />
      </button>
    ))}
    <div className="ml-auto flex">
      <button type="button" className={clsx(statusCell, "w-[31px] border-l text-[12px] underline")}>模型</button>
      <button type="button" aria-label="Layout" className={clsx(statusCell, "w-[22px]")}><Icon name="layout" /></button>
      <button type="button" aria-label="Quick view" className={clsx(statusCell, "w-[23px]")}><Icon name="quickView" /></button>
      <span className="w-4" />
      {["pan", "zoom", "wheel", "motion"].map((n) => (
        <button key={n} type="button" aria-label={n} className={clsx(statusCell, "w-[22px]")}><Icon name={n} /></button>
      ))}
      <span className="w-[18px]" />
      <button type="button" className={clsx(statusCell, "w-[54px] gap-1 font-[Liberation_Mono,monospace] text-[11px]")}>
        <Icon name="annot" className="h-4 w-4" />
        1:1
        <svg viewBox="0 0 8 5" className="h-[5px] w-2"><path d="M0 0h8L4 5z" fill="#111" /></svg>
      </button>
      <button type="button" aria-label="Annotation visibility" className={clsx(statusCell, "w-[22px] text-[#8f7a50]")}><Icon name="annot" /></button>
      <button type="button" aria-label="Auto scale" className={clsx(statusCell, "w-[22px] text-[#999]")}><Icon name="annot" /></button>
      <span className="w-[6px]" />
      <button type="button" aria-label="Workspace" className={clsx(statusCell, "w-[22px]")}><Icon name="gear" /></button>
      <button type="button" aria-label="Lock" className={clsx(statusCell, "w-[22px]")}><Icon name="lock" /></button>
      <span className="w-[3px]" />
      <button type="button" aria-label="Status menu" className={clsx(statusCell, "w-[13px]")}>
        <svg viewBox="0 0 6 4" className="h-1 w-[6px]"><path d="M0 0h6L3 4z" fill="#111" /></svg>
      </button>
      <button type="button" aria-label="Clean screen" className={clsx(statusCell, "w-[22px]")}><Icon name="clean" /></button>
    </div>
  </footer>
);

export default function App() {
  return (
    <div className="flex h-screen flex-col overflow-hidden bg-[#adadb5] font-[Liberation_Mono,Noto_Sans_CJK_SC,monospace]">
      <TitleBar />
      <Toolbars />
      <main className="flex min-h-0 flex-1 items-start">
        <VerticalBar tools={drawTools} className="w-[25px]" />
        <div className="ml-[5px] flex min-w-0 flex-1 flex-col self-stretch border-l border-[#55555a] pb-1">
          <div className="flex min-h-0 flex-1">
            <Drawing />
            <div className="flex w-[18px] shrink-0 flex-col items-center bg-[#f8f8f4] py-px">
              <ScrollButton dir="up" className="h-4 w-4" />
              <span className="flex-1" />
              <Thumb className="h-4 w-[14px]" />
              <span className="grow-[1.3]" />
              <ScrollButton dir="down" className="h-4 w-4" />
            </div>
          </div>
          <LayoutTabs />
        </div>
        <div className="mr-[3px] ml-[5px] flex w-[25px] shrink-0 flex-col">
          <VerticalBar tools={modifyTools} />
          <VerticalBar tools={["order1", "order2", "order3", "order4"]} className="mt-[2px]" />
        </div>
      </main>
      <CommandLine />
      <StatusBar />
    </div>
  );
}
